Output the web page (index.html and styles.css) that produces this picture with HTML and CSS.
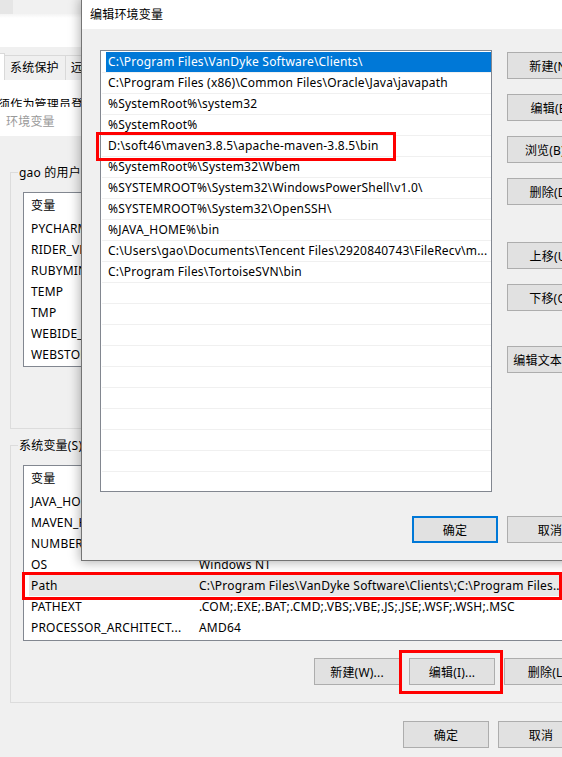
FILE: index.html
```html
<!DOCTYPE html>
<html lang="zh-CN">
<head>
<meta charset="utf-8">
<title>编辑环境变量</title>
<link rel="stylesheet" href="styles.css">
</head>
<body>
<div class="screen">

  <div class="sysprops">
    <div class="sp-strip"></div>
    <div class="sp-white"></div>
    <div class="sp-tabbar">
      <span class="tab tab-active"></span>
      <span class="tab">系统保护</span>
      <span class="tab">远程</span>
    </div>
    <div class="sp-page">
      <p class="sp-note">须作为管理员登录才能进行这些更改。</p>
    </div>
  </div>

  <div class="envwin">
    <div class="env-title">环境变量</div>
    <div class="env-body">
      <div class="group group-user">
        <div class="group-title">gao 的用户变量(U)</div>
        <div class="listview lv-user">
          <div class="lv-head"><span class="c1">变量</span><span class="c2">值</span></div>
          <div class="lv-row"><div class="lv-item"><span class="c1">PYCHARM_VM_OPTIONS</span><span class="c2">D:\jetbrains\pycharm.vmoptions</span></div></div>
          <div class="lv-row"><div class="lv-item"><span class="c1">RIDER_VM_OPTIONS</span><span class="c2">D:\jetbrains\rider.vmoptions</span></div></div>
          <div class="lv-row"><div class="lv-item"><span class="c1">RUBYMINE_VM_OPTIONS</span><span class="c2">D:\jetbrains\rubymine.vmoptions</span></div></div>
          <div class="lv-row"><div class="lv-item"><span class="c1">TEMP</span><span class="c2">%USERPROFILE%\AppData\Local\Temp</span></div></div>
          <div class="lv-row"><div class="lv-item"><span class="c1">TMP</span><span class="c2">%USERPROFILE%\AppData\Local\Temp</span></div></div>
          <div class="lv-row"><div class="lv-item"><span class="c1">WEBIDE_VM_OPTIONS</span><span class="c2">D:\jetbrains\webide.vmoptions</span></div></div>
          <div class="lv-row"><div class="lv-item"><span class="c1">WEBSTORM_VM_OPTIONS</span><span class="c2">D:\jetbrains\webstorm.vmoptions</span></div></div>
        </div>
        <div class="btn-row">
          <button class="btn">新建(N)...</button>
          <button class="btn">编辑(E)...</button>
          <button class="btn">删除(D)</button>
        </div>
      </div>

      <div class="group group-sys">
        <div class="group-title">系统变量(S)</div>
        <div class="listview lv-sys">
          <div class="lv-head"><span class="c1">变量</span><span class="c2">值</span></div>
          <div class="lv-row"><div class="lv-item"><span class="c1">JAVA_HOME</span><span class="c2">C:\Program Files\Java\jdk1.8.0_281</span></div></div>
          <div class="lv-row"><div class="lv-item"><span class="c1">MAVEN_HOME</span><span class="c2">D:\soft46\maven3.8.5\apache-maven-3.8.5</span></div></div>
          <div class="lv-row"><div class="lv-item"><span class="c1">NUMBER_OF_PROCESSORS</span><span class="c2">8</span></div></div>
          <div class="lv-row"><div class="lv-item"><span class="c1">OS</span><span class="c2">Windows NT</span></div></div>
          <div class="lv-row"><div class="lv-item lv-selected"><span class="c1">Path</span><span class="c2">C:\Program Files\VanDyke Software\Clients\;C:\Program Files...</span></div></div>
          <div class="lv-row"><div class="lv-item"><span class="c1">PATHEXT</span><span class="c2">.COM;.EXE;.BAT;.CMD;.VBS;.VBE;.JS;.JSE;.WSF;.WSH;.MSC</span></div></div>
          <div class="lv-row"><div class="lv-item"><span class="c1">PROCESSOR_ARCHITECT...</span><span class="c2">AMD64</span></div></div>
        </div>
        <div class="btn-row">
          <button class="btn">新建(W)...</button>
          <button class="btn">编辑(I)...</button>
          <button class="btn">删除(L)</button>
        </div>
      </div>

      <div class="dlg-foot">
        <button class="btn">确定</button>
        <button class="btn">取消</button>
      </div>
    </div>
  </div>

  <div class="editwin">
    <div class="ew-title">编辑环境变量</div>
    <div class="ew-body">
      <div class="ew-main">
        <div class="ew-list">
          <div class="ew-row"><div class="ew-item ew-selected">C:\Program Files\VanDyke Software\Clients\</div></div>
          <div class="ew-row"><div class="ew-item">C:\Program Files (x86)\Common Files\Oracle\Java\javapath</div></div>
          <div class="ew-row"><div class="ew-item">%SystemRoot%\system32</div></div>
          <div class="ew-row"><div class="ew-item">%SystemRoot%</div></div>
          <div class="ew-row"><div class="ew-item">D:\soft46\maven3.8.5\apache-maven-3.8.5\bin</div></div>
          <div class="ew-row"><div class="ew-item">%SystemRoot%\System32\Wbem</div></div>
          <div class="ew-row"><div class="ew-item">%SYSTEMROOT%\System32\WindowsPowerShell\v1.0\</div></div>
          <div class="ew-row"><div class="ew-item">%SYSTEMROOT%\System32\OpenSSH\</div></div>
          <div class="ew-row"><div class="ew-item">%JAVA_HOME%\bin</div></div>
          <div class="ew-row"><div class="ew-item">C:\Users\gao\Documents\Tencent Files\2920840743\FileRecv\m...</div></div>
          <div class="ew-row"><div class="ew-item">C:\Program Files\TortoiseSVN\bin</div></div>
          <div class="ew-row"><div class="ew-item"></div></div>
          <div class="ew-row"><div class="ew-item"></div></div>
          <div class="ew-row"><div class="ew-item"></div></div>
          <div class="ew-row"><div class="ew-item"></div></div>
          <div class="ew-row"><div class="ew-item"></div></div>
          <div class="ew-row"><div class="ew-item"></div></div>
          <div class="ew-row"><div class="ew-item"></div></div>
          <div class="ew-row"><div class="ew-item"></div></div>
          <div class="ew-row"><div class="ew-item"></div></div>
          <div class="ew-row"><div class="ew-item"></div></div>
        </div>
        <div class="ew-side">
          <button class="btn">新建(N)</button>
          <button class="btn">编辑(E)</button>
          <button class="btn">浏览(B)...</button>
          <button class="btn">删除(D)</button>
          <button class="btn gap-l">上移(U)</button>
          <button class="btn">下移(O)</button>
          <button class="btn gap-m">编辑文本(T)...</button>
        </div>
      </div>
      <div class="ew-foot">
        <button class="btn btn-default">确定</button>
        <button class="btn">取消</button>
      </div>
    </div>
  </div>

  <div class="mark mark-maven"></div>
  <div class="mark mark-path"></div>
  <div class="mark mark-edit"></div>
</div>
</body>
</html>
```

FILE: styles.css
```css
* { box-sizing: border-box; }

html, body {
  margin: 0;
  padding: 0;
}

body {
  width: 562px;
  height: 757px;
  overflow: hidden;
  background: #f0f0f0;
  font-family: "Noto Sans", "Noto Sans CJK SC", sans-serif;
  font-size: 12px;
  letter-spacing: 0.2px;
  color: #000;
}

.screen {
  position: relative;
  width: 562px;
  height: 757px;
  overflow: hidden;
}

/* ---------- background: system properties ---------- */
.sysprops {
  width: 562px;
}

.sp-strip {
  height: 14px;
  background: linear-gradient(to right, #e6e6e6 0, #e6e6e6 13px, #f1f1f1 13px);
}

.sp-white {
  height: 33px;
  background: linear-gradient(to bottom, #f4f4f4 0, #ffffff 4px);
}

.sp-tabbar {
  height: 33px;
  background: #f0f0f0;
  display: flex;
  align-items: flex-end;
}

.tab {
  height: 25px;
  line-height: 24px;
  padding: 0 6px 0 5px;
  border: 1px solid #d9d9d9;
  border-bottom: none;
  margin-left: -1px;
  background: #f0f0f0;
  white-space: nowrap;
}

.tab-active {
  width: 5px;
  height: 27px;
  margin-left: 0;
  padding: 0;
  background: #ffffff;
  border-left: none;
}

.sp-page {
  height: 27px;
  background: #ffffff;
  overflow: hidden;
}

.sp-note {
  margin: 17px 0 0 -2px;
  line-height: 16px;
  white-space: nowrap;
}

/* ---------- background: environment variables window ---------- */
.envwin {
  width: 612px;
}

.env-title {
  height: 29px;
  line-height: 29px;
  padding-left: 6px;
  background: #ffffff;
  color: #999999;
}

.env-body {
  background: #f0f0f0;
  padding: 0 10px;
  height: 621px;
}

.group {
  border: 1px solid #dcdcdc;
  padding: 0 11px 17px 12px;
}

.group-user { margin-top: 36px; }
.group-sys { margin-top: 16px; }

.group-title {
  display: table;
  margin: -8px 0 0 -5px;
  padding: 0 1px;
  line-height: 16px;
  background: #f0f0f0;
  white-space: nowrap;
}

.listview {
  margin-top: 11px;
  border: 1px solid #828790;
  background: #ffffff;
  overflow: hidden;
}

.lv-user { height: 175px; }
.lv-sys { height: 176px; }

.lv-head {
  display: flex;
  height: 25px;
  line-height: 25px;
  padding-left: 5px;
}

.lv-row {
  height: 21px;
  padding-left: 1px;
}

.lv-item {
  display: flex;
  height: 21px;
  line-height: 21px;
  margin-left: 4px;
}

.lv-selected {
  background: #e8e8e8;
}

.c1 {
  flex: 0 0 168px;
  padding-left: 2px;
  white-space: nowrap;
  overflow: hidden;
}

.c2 {
  flex: 1;
  padding-left: 2px;
  white-space: nowrap;
  overflow: hidden;
}

.btn-row {
  display: flex;
  justify-content: flex-end;
  gap: 9px;
  margin-top: 17px;
}

.btn {
  width: 86px;
  height: 27px;
  padding: 0;
  margin: 0;
  border: 1px solid #adadad;
  background: #e1e1e1;
  font: inherit;
  letter-spacing: inherit;
  color: #000;
  white-space: nowrap;
  text-align: center;
  flex: 0 0 auto;
}

.dlg-foot {
  display: flex;
  justify-content: flex-end;
  gap: 9px;
  margin-top: 18px;
  padding-right: 18px;
}

/* ---------- foreground: edit environment variable ---------- */
.editwin {
  position: absolute;
  left: 81px;
  top: -1px;
  width: 640px;
  height: 562px;
  border: 1px solid #747474;
  background: #f0f0f0;
  box-shadow: 0 0 11px 1px rgba(0, 0, 0, 0.32);
}

.ew-title {
  height: 29px;
  line-height: 29px;
  padding-left: 8px;
  background: #ffffff;
}

.ew-body {
  padding: 21px 0 0 18px;
}

.ew-main {
  display: flex;
  gap: 15px;
}

.ew-list {
  width: 392px;
  height: 442px;
  border: 1px solid #828790;
  background: #ffffff;
  padding-top: 1px;
  overflow: hidden;
}

.ew-row {
  height: 21px;
  margin-left: 1px;
  border-bottom: 1px solid #f0f0f0;
}

.ew-item {
  height: 20px;
  line-height: 20px;
  margin-left: 4px;
  padding-left: 2px;
  white-space: nowrap;
  overflow: hidden;
}

.ew-selected {
  background: #0078d7;
  color: #ffffff;
}

.ew-side {
  display: flex;
  flex-direction: column;
  padding-top: 2px;
  gap: 15px;
}

.ew-side .gap-l { margin-top: 22px; }
.ew-side .gap-m { margin-top: 20px; }

.ew-foot {
  width: 493px;
  display: flex;
  justify-content: flex-end;
  gap: 9px;
  margin-top: 24px;
}

.btn-default {
  border: 2px solid #0078d7;
}

/* ---------- red annotation boxes ---------- */
.mark {
  position: absolute;
  border: 3px solid #ff0000;
}

.mark-maven {
  left: 96px;
  top: 132px;
  width: 300px;
  height: 29px;
}

.mark-path {
  left: 22px;
  top: 572px;
  width: 540px;
  height: 28px;
}

.mark-edit {
  left: 399px;
  top: 650px;
  width: 104px;
  height: 44px;
}
```
